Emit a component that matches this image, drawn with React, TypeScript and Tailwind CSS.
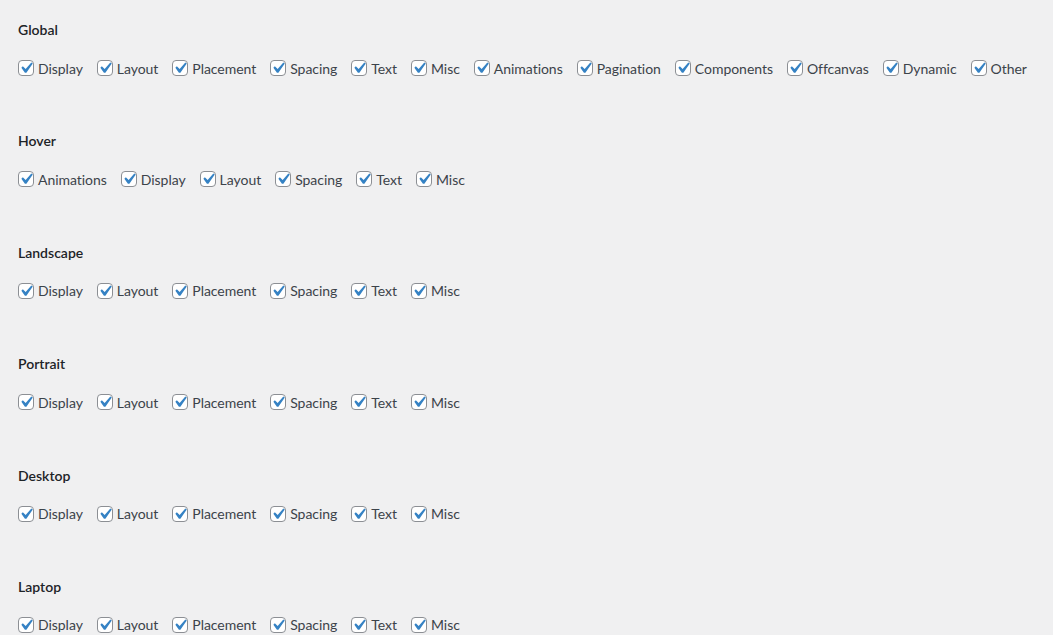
const groups: { title: string; items: string[] }[] = [
  {
    title: "Global",
    items: ["Display", "Layout", "Placement", "Spacing", "Text", "Misc", "Animations", "Pagination", "Components", "Offcanvas", "Dynamic", "Other"],
  },
  { title: "Hover", items: ["Animations", "Display", "Layout", "Spacing", "Text", "Misc"] },
  { title: "Landscape", items: ["Display", "Layout", "Placement", "Spacing", "Text", "Misc"] },
  { title: "Portrait", items: ["Display", "Layout", "Placement", "Spacing", "Text", "Misc"] },
  { title: "Desktop", items: ["Display", "Layout", "Placement", "Spacing", "Text", "Misc"] },
  { title: "Laptop", items: ["Display", "Layout", "Placement", "Spacing", "Text", "Misc"] },
];

function Check({ label }: { label: string }) {
  return (
    <label className="flex items-center mr-[14px] cursor-pointer">
      <span className="relative w-4 h-4 mr-1 rounded-[4px] border border-[#8c8f94] bg-white shrink-0">
        <svg viewBox="0 0 20 20" className="absolute -left-[4px] -top-[4px] w-[22px] h-[22px]">
          <path d="M14.83 4.89l1.34.94-5.81 8.38H9.02L5.78 9.67l1.34-1.25 2.57 2.4z" fill="#3582c4" />
        </svg>
      </span>
      <span>{label}</span>
    </label>
  );
}

export default function App() {
  return (
    <div className="h-screen overflow-hidden bg-[#f0f0f1] pt-5 px-[18px] text-[14px] text-[#3c434a] font-['Lato','Noto_Sans',sans-serif]">
      {groups.map((g) => (
        <div key={g.title} className="mb-[53.4px]">
          <h2 className="leading-5 font-semibold text-[#1d2327] mb-[18px]">{g.title}</h2>
          <div className="flex items-center h-5 whitespace-nowrap tracking-[-0.04px]">
            {g.items.map((it) => (
              <Check key={it} label={it} />
            ))}
          </div>
        </div>
      ))}
    </div>
  );
}
